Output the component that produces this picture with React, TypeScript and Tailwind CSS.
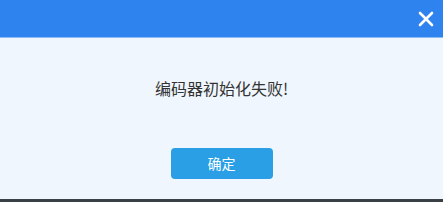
import React from "react";

const App = () => {
  return (
    <div
      className="w-[443px] h-[202px] flex flex-col bg-[#f0f6fd] border-b-[3px] border-[#3b4046]"
      style={{ fontFamily: '"Microsoft YaHei", "Noto Sans CJK SC", sans-serif' }}
    >
      {/* header */}
      <div className="h-[38px] bg-[#2e83ee] border-b border-[#8dbcf5] flex items-center justify-end pr-[9px]">
        <button className="w-[16px] h-[16px] flex items-center justify-center">
          <svg width="16" height="16" viewBox="0 0 16 16">
            <path d="M2 2 L14 14 M14 2 L2 14" stroke="#ffffff" strokeWidth="2.6" strokeLinecap="round" />
          </svg>
        </button>
      </div>

      <div className="flex-1 flex flex-col items-center">
        <p className="mt-[41px] text-[16px] leading-[18px] text-[#333333]">编码器初始化失败!</p>
        <button className="mt-[51px] w-[102px] h-[31px] rounded-[4px] bg-[#2a9fe5] text-white text-[14px]">
          确定
        </button>
      </div>
    </div>
  );
};

export default App;
